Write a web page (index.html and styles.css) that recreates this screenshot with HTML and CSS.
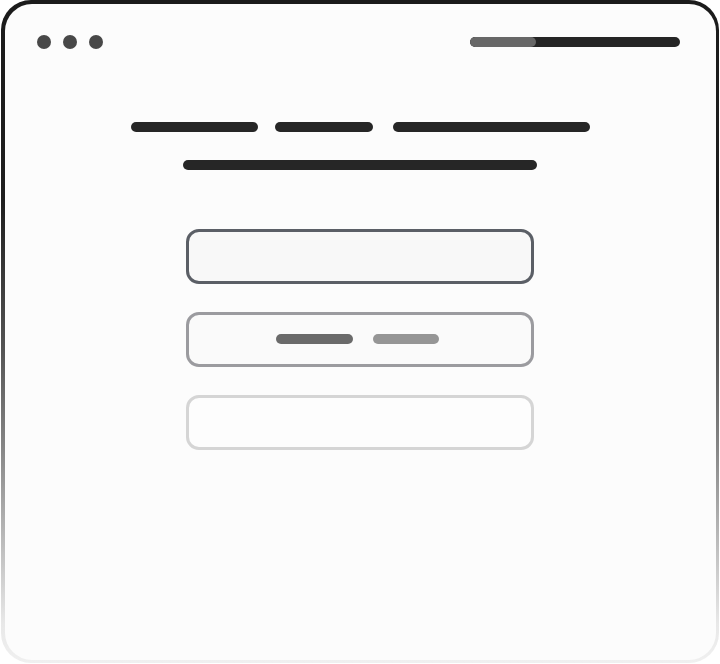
FILE: index.html
```html
<!DOCTYPE html>
<html>
<head>
<meta charset="utf-8">
<link rel="stylesheet" href="styles.css">
</head>
<body>
<div class="frame">
  <div class="inner">
    <div class="header">
      <div class="dots">
        <span class="dot"></span>
        <span class="dot"></span>
        <span class="dot"></span>
      </div>
      <div class="progress"><span class="progress-fill"></span></div>
    </div>
    <div class="title">
      <div class="title-row">
        <span class="bar bar-a"></span>
        <span class="bar bar-b gap-17"></span>
        <span class="bar bar-c gap-20"></span>
      </div>
      <div class="title-row">
        <span class="bar bar-d"></span>
      </div>
    </div>
    <div class="boxes">
      <div class="box box-1"></div>
      <div class="box box-2">
        <span class="pill pill-a"></span>
        <span class="pill pill-b"></span>
      </div>
      <div class="box box-3"></div>
    </div>
  </div>
</div>
</body>
</html>
```
FILE: styles.css
```css
html, body {
  margin: 0;
  padding: 0;
  background: #ffffff;
}
.frame {
  box-sizing: border-box;
  width: 718px;
  height: 663px;
  margin: 0 1px 0 1px;
  padding: 3.5px;
  border-radius: 30px;
  background: linear-gradient(to bottom, #1b1b1b 0%, #1e1e1e 30%, #555555 53%, #888888 68%, #c0c0c0 83%, #e8e8e8 94%, #f0f0f0 100%);
}
.inner {
  box-sizing: border-box;
  height: 100%;
  border-radius: 27px;
  background: #fcfcfc;
  display: flex;
  flex-direction: column;
  align-items: center;
  padding-top: 31px;
}
.header {
  align-self: stretch;
  display: flex;
  justify-content: space-between;
  align-items: center;
  height: 14px;
  padding: 0 36px 0 32px;
}
.dots {
  display: flex;
  gap: 12px;
}
.dot {
  width: 14px;
  height: 14px;
  border-radius: 50%;
  background: #484848;
}
.progress {
  width: 210px;
  height: 10px;
  border-radius: 5px;
  background: #252525;
  display: flex;
  overflow: hidden;
}
.progress-fill {
  width: 66px;
  height: 100%;
  border-radius: 5px;
  background: #676767;
}
.title {
  margin-top: 73px;
  display: flex;
  flex-direction: column;
  align-items: center;
  gap: 28px;
}
.title-row {
  display: flex;
}
.bar {
  height: 10px;
  border-radius: 5px;
  background: #262626;
}
.bar-a { width: 127px; }
.bar-b { width: 98px; }
.bar-c { width: 197px; }
.bar-d { width: 354px; }
.gap-17 { margin-left: 17px; }
.gap-20 { margin-left: 20px; }
.boxes {
  margin-top: 59px;
  display: flex;
  flex-direction: column;
  gap: 28px;
}
.box {
  box-sizing: border-box;
  width: 348px;
  height: 55px;
  border-radius: 13px;
  border: 3px solid;
  display: flex;
  align-items: center;
  justify-content: center;
  gap: 20px;
}
.box-1 {
  border-color: #5b5f66;
  background: #f8f8f8;
}
.box-2 {
  border-color: #9b9b9f;
  background: #fafafa;
  padding-right: 5px;
}
.box-3 {
  border-color: #d5d5d5;
  background: #fdfdfd;
}
.pill {
  height: 10px;
  border-radius: 5px;
}
.pill-a {
  width: 77px;
  background: #6a6a6a;
}
.pill-b {
  width: 66px;
  background: #959595;
}
```
